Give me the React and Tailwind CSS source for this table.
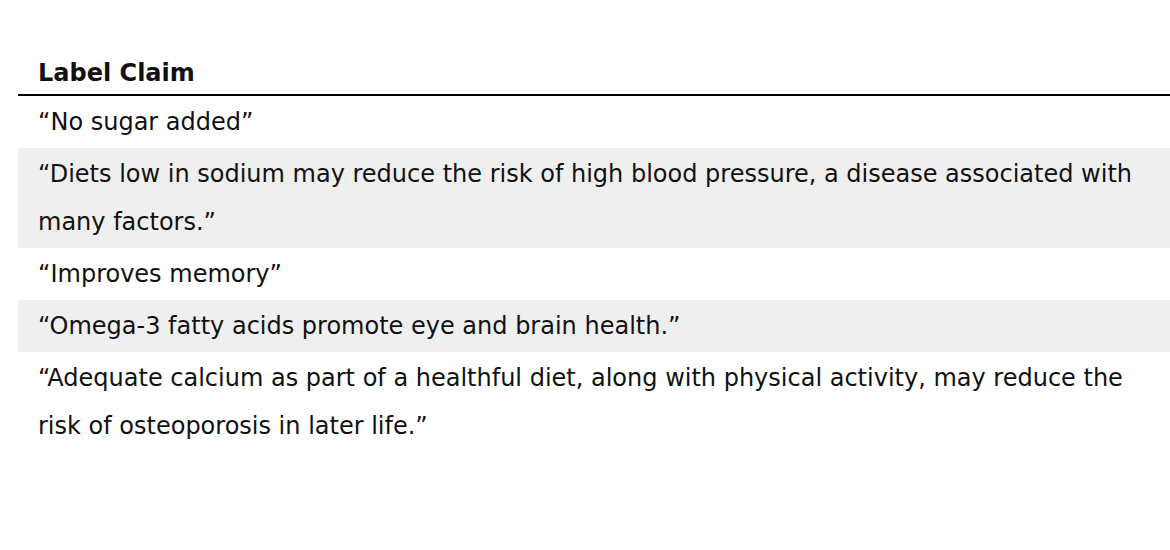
export default function App() {
  const rows = [
    "\u201cNo sugar added\u201d",
    "\u201cDiets low in sodium may reduce the risk of high blood pressure, a disease associated with many factors.\u201d",
    "\u201cImproves memory\u201d",
    "\u201cOmega-3 fatty acids promote eye and brain health.\u201d",
    "\u201cAdequate calcium as part of a healthful diet, along with physical activity, may reduce the risk of osteoporosis in later life.\u201d",
  ];
  return (
    <div className="w-[1170px] h-[550px] bg-white pt-[50px] pl-[18px] overflow-hidden" style={{ fontFamily: '"DejaVu Sans", Verdana, sans-serif' }}>
      <table className="w-[1160px] border-collapse text-[24px] text-[#111]">
        <thead>
          <tr className="border-b-2 border-black">
            <th className="text-left font-bold px-5 pt-[3px] pb-[1px] leading-[40px]">Label Claim</th>
          </tr>
        </thead>
        <tbody>
          {rows.map((r, i) => (
            <tr key={i} className={i % 2 === 1 ? "bg-[#efefef]" : ""}>
              <td className="px-5 py-[2px] leading-[48px]">{r}</td>
            </tr>
          ))}
        </tbody>
      </table>
    </div>
  );
}
